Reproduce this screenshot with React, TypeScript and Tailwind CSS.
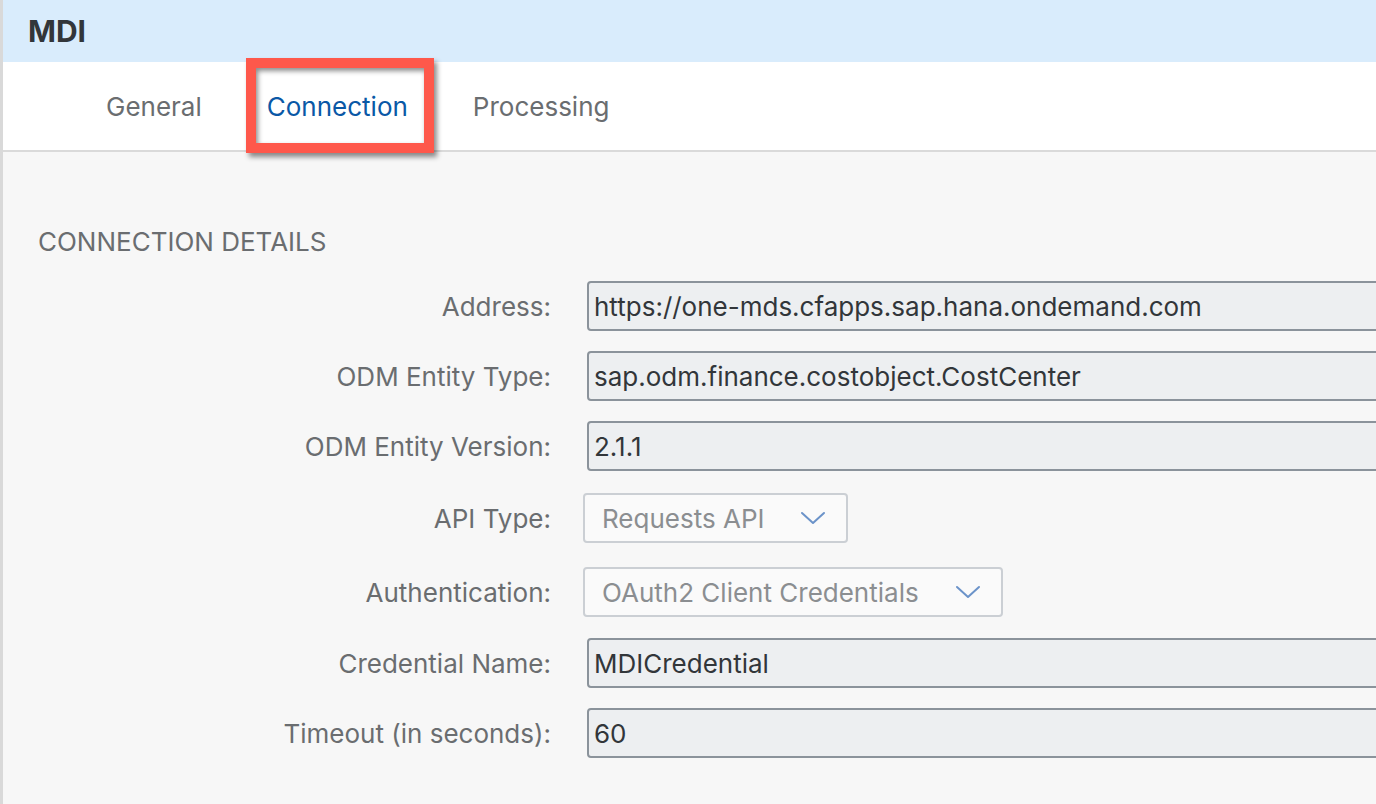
import React from 'react';

interface Field {
    label: string;
    value: string;
    kind: 'input' | 'select';
    space: string;
    width?: string;
}

const fields: Field[] = [
    { label: 'Address:', value: 'https://one-mds.cfapps.sap.hana.ondemand.com', kind: 'input', space: 'mt-0' },
    { label: 'ODM Entity Type:', value: 'sap.odm.finance.costobject.CostCenter', kind: 'input', space: 'mt-[20px]' },
    { label: 'ODM Entity Version:', value: '2.1.1', kind: 'input', space: 'mt-[20px]' },
    { label: 'API Type:', value: 'Requests API', kind: 'select', space: 'mt-[22px]', width: 'w-[265px]' },
    { label: 'Authentication:', value: 'OAuth2 Client Credentials', kind: 'select', space: 'mt-[24px]', width: 'w-[420px]' },
    { label: 'Credential Name:', value: 'MDICredential', kind: 'input', space: 'mt-[21px]' },
    { label: 'Timeout (in seconds):', value: '60', kind: 'input', space: 'mt-[20px]' },
];

const Chevron = () => (
    <svg width="26" height="14" viewBox="0 0 26 14" fill="none" className="shrink-0">
        <path d="M2 2 L13 12 L24 2" stroke="#6b93c9" strokeWidth="2" strokeLinecap="round" strokeLinejoin="round" />
    </svg>
);

const App = () => {
    return (
        <div className="w-[1376px] h-[804px] overflow-hidden bg-[#f7f7f7] border-l-[3px] border-[#d9d9d9] font-['Inter','Liberation_Sans',sans-serif]">
            {/* Header */}
            <div className="h-[62px] bg-[#d9ecfc] flex items-center pl-[25px]">
                <span className="text-[30px] font-bold text-[#32363a]">MDI</span>
            </div>

            {/* Tabs */}
            <div className="h-[90px] bg-white border-b-2 border-[#dadada] flex items-stretch pl-[103px] gap-[65px] text-[26px] text-[#6a6d70]">
                <div className="flex items-center">General</div>
                <div className="relative flex items-center text-[#0a58a6]">
                    Connection
                    <div className="absolute left-[-21px] right-[-26px] top-[-4px] bottom-[-3px] border-[10px] border-[#fe584b] shadow-[3px_4px_5px_rgba(0,0,0,0.45),inset_2px_3px_5px_rgba(0,0,0,0.45)]" />
                </div>
                <div className="flex items-center">Processing</div>
            </div>

            {/* Content */}
            <div className="pt-[76px]">
                <div className="pl-[35px] text-[26px] text-[#6a6d70] leading-[28px]">CONNECTION DETAILS</div>
                <div className="mt-[25px] flex flex-col">
                    {fields.map((f) => (
                        <div key={f.label} className={`flex items-center ${f.space} ${f.kind === 'select' ? 'gap-[32px]' : 'gap-[36px]'}`}>
                            <div className="w-[548px] shrink-0 text-right text-[26px] text-[#6a6d70]">{f.label}</div>
                            {f.kind === 'input' ? (
                                <div className="flex-1 -mr-[10px] h-[50px] bg-[#edeff1] border-2 border-[#8b939b] rounded-[4px] flex items-center px-[5px] text-[26px] text-[#32363a]">
                                    {f.value}
                                </div>
                            ) : (
                                <div className={`${f.width} h-[50px] bg-[#fafafa] border-2 border-[#cbcfd4] rounded-[4px] flex items-center justify-between pl-[17px] pr-[20px] text-[26px] text-[#8b8e91]`}>
                                    <span>{f.value}</span>
                                    <Chevron />
                                </div>
                            )}
                        </div>
                    ))}
                </div>
            </div>
        </div>
    );
};

export default App;
